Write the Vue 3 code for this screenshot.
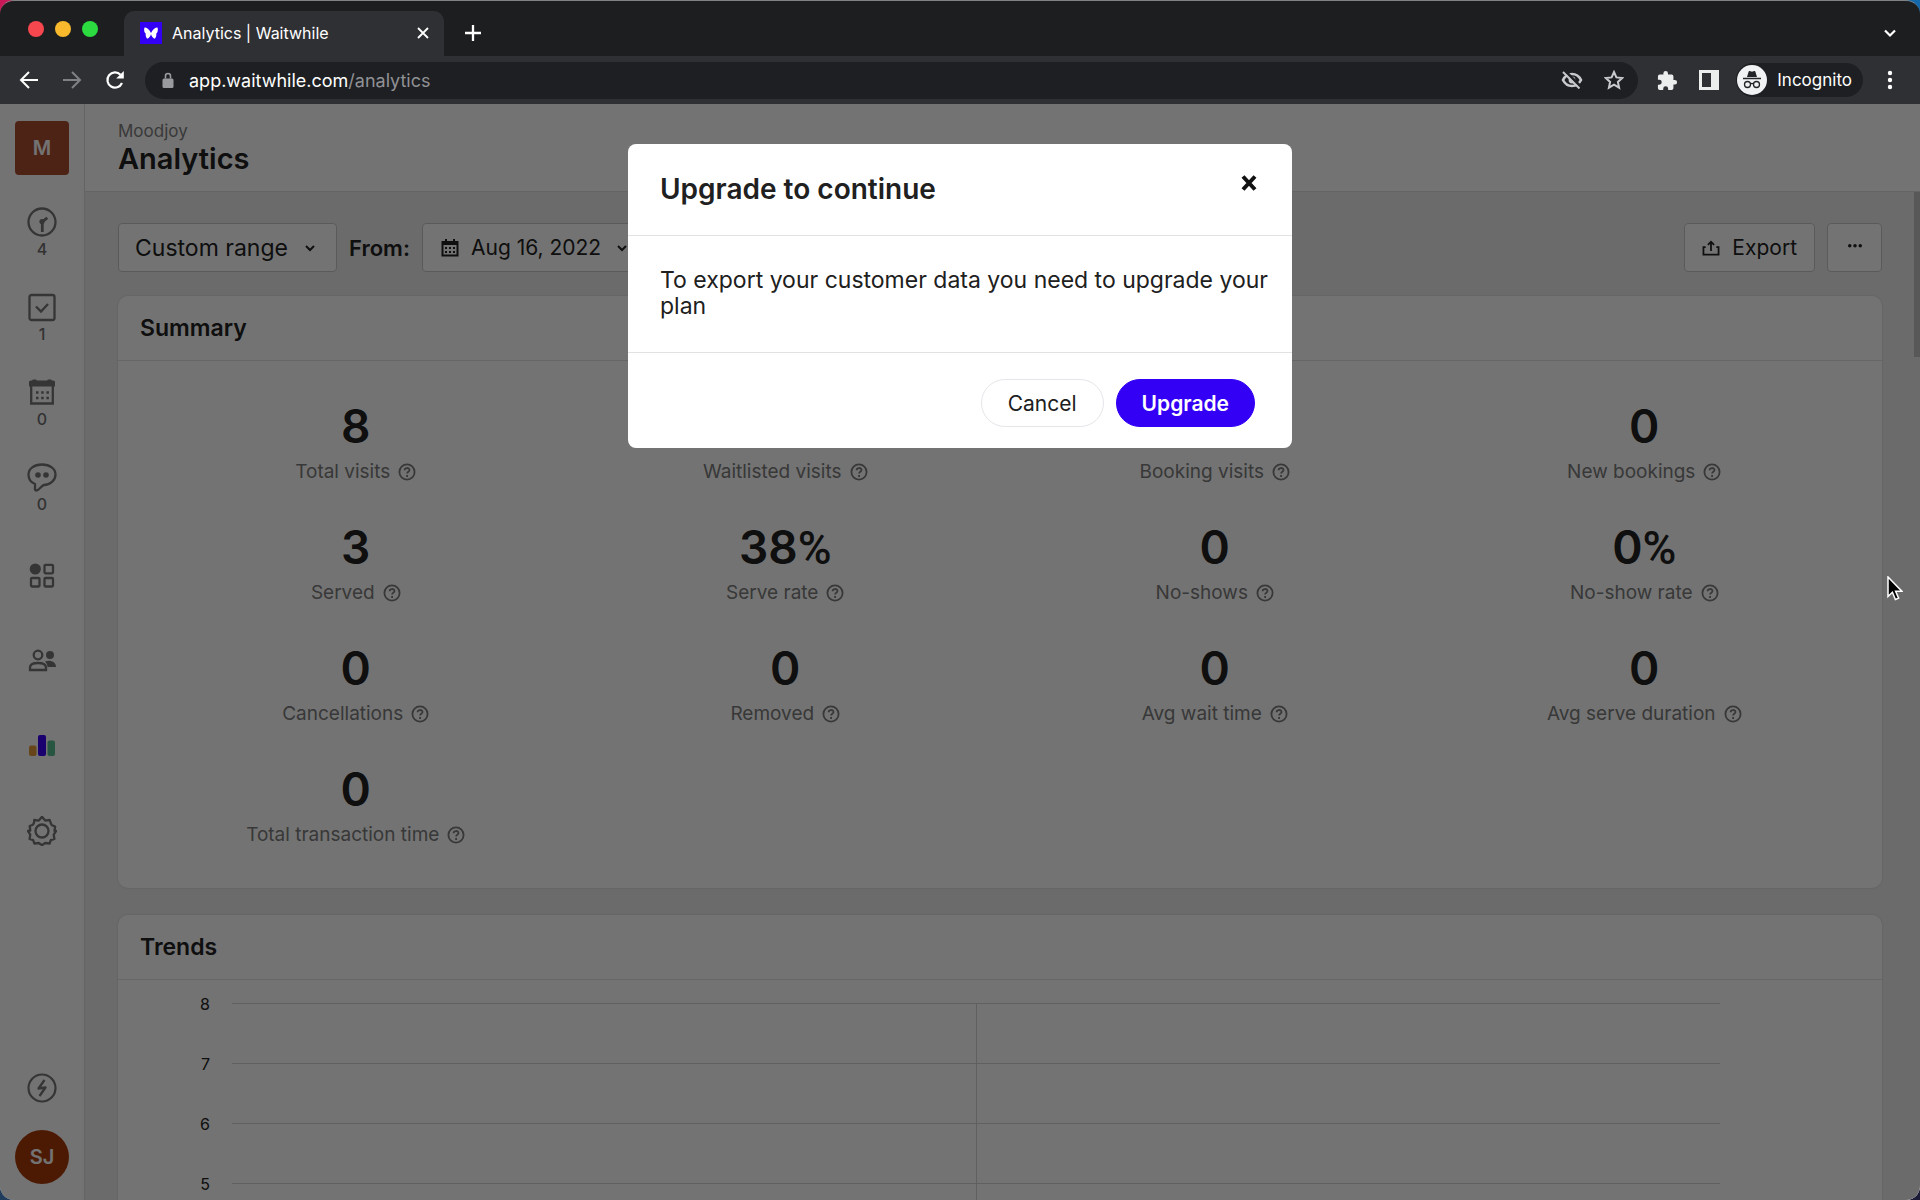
<script setup>
import { ref } from 'vue'

const range = ref('Custom range')

const navItems = [
  { icon: 'gauge', label: 'Dashboard', count: 4 },
  { icon: 'check', label: 'Waitlist', count: 1 },
  { icon: 'calendar', label: 'Bookings', count: 0 },
  { icon: 'chat', label: 'Messages', count: 0 },
  { icon: 'apps', label: 'Apps' },
  { icon: 'people', label: 'Customers' },
  { icon: 'bars', label: 'Analytics' },
  { icon: 'gear', label: 'Settings' },
]

const stats = [
  { value: '8', label: 'Total visits' },
  { value: '', label: 'Waitlisted visits' },
  { value: '', label: 'Booking visits' },
  { value: '0', label: 'New bookings' },
  { value: '3', label: 'Served' },
  { value: '38', unit: '%', label: 'Serve rate' },
  { value: '0', label: 'No-shows' },
  { value: '0', unit: '%', label: 'No-show rate' },
  { value: '0', label: 'Cancellations' },
  { value: '0', label: 'Removed' },
  { value: '0', label: 'Avg wait time' },
  { value: '0', label: 'Avg serve duration' },
  { value: '0', label: 'Total transaction time' },
]

const ticks = [8, 7, 6, 5]
</script>

<template>
  <div class="desktop">
    <div class="window">
      <div class="tabstrip">
        <div class="lights">
          <span class="light red"></span>
          <span class="light amber"></span>
          <span class="light green"></span>
        </div>
        <div class="tab">
          <svg class="favicon" viewBox="0 0 22 22" width="22" height="22">
            <rect width="22" height="22" fill="#3300f5" />
            <path d="M4.500 5.500c2.500 0 5 2 6.500 5.500 1.500-3.500 4-5.500 6.500-5.500.8 2.500.3 4.800-1.200 6 .3 2-.3 4-1.600 5.300-1.900-.9-3-2.600-3.700-4.600-.7 2-1.800 3.700-3.700 4.600C6 15.500 5.400 13.500 5.700 11.500c-1.500-1.200-2-3.500-1.200-6z" fill="#fff" />
          </svg>
          <span class="tab-title">Analytics | Waitwhile</span>
          <button class="plain" aria-label="Close tab">
            <svg viewBox="0 0 14 14" width="14" height="14"><path d="M2 2l10 10M12 2L2 12" stroke="#fff" stroke-width="1.800" /></svg>
          </button>
        </div>
        <button class="plain new-tab" aria-label="New tab">
          <svg viewBox="0 0 18 18" width="18" height="18"><path d="M9 1v16M1 9h16" stroke="#fff" stroke-width="2.300" /></svg>
        </button>
        <button class="plain tab-menu" aria-label="Search tabs">
          <svg viewBox="0 0 14 14" width="14" height="14"><path d="M2 4.500l5 5 5-5" fill="none" stroke="#fff" stroke-width="2.200" /></svg>
        </button>
      </div>

      <div class="toolbar">
        <div class="nav-buttons">
          <button class="plain" aria-label="Back">
            <svg viewBox="0 0 20 20" width="20" height="20"><path d="M19 10H2.500M10 2L2 10l8 8" fill="none" stroke="#fff" stroke-width="2" /></svg>
          </button>
          <button class="plain" aria-label="Forward">
            <svg viewBox="0 0 20 20" width="20" height="20"><path d="M1 10h16.500M10 2l8 8-8 8" fill="none" stroke="#808185" stroke-width="2" /></svg>
          </button>
          <button class="plain" aria-label="Reload">
            <svg viewBox="0 0 20 20" width="20" height="20"><path d="M17 13a7.600 7.600 0 1 1-1.500-8.300" fill="none" stroke="#fff" stroke-width="2.200" /><path d="M18.800 1v7.600h-7.600z" fill="#fff" /></svg>
          </button>
        </div>
        <div class="address">
          <svg viewBox="0 0 14 18" width="14" height="18"><rect x="1.500" y="7.500" width="11" height="9.500" rx="1.500" fill="#9a9b9e" /><path d="M4.500 7.500V5a2.500 2.500 0 0 1 5 0v2.500" fill="none" stroke="#9a9b9e" stroke-width="1.600" /></svg>
          <a class="url" href="#">app.waitwhile.com<span>/analytics</span></a>
          <button class="plain" aria-label="Third-party cookies blocked">
            <svg viewBox="0 0 22 18" width="22" height="18"><path d="M2 9c2-4 5.300-6 9-6s7 2 9 6c-2 4-5.300 6-9 6s-7-2-9-6z" fill="none" stroke="#c8c9cc" stroke-width="2.600" /><circle cx="11" cy="9" r="3.400" fill="#c8c9cc" /><path d="M4 0l16 16" stroke="#1e1f22" stroke-width="3" /><path d="M2 1l16.500 16.500" stroke="#c8c9cc" stroke-width="2" /></svg>
          </button>
          <button class="plain" aria-label="Bookmark this tab">
            <svg viewBox="0 0 20 20" width="20" height="20"><path d="M10 2l2.400 5.400 5.900.6-4.400 3.900 1.200 5.800-5.100-3-5.100 3 1.200-5.800L1.700 8l5.900-.6z" fill="none" stroke="#c8c9cc" stroke-width="2" /></svg>
          </button>
        </div>
        <button class="plain" aria-label="Extensions">
          <svg viewBox="1 0 23 23" width="21" height="21"><path d="M20.500 11H19V7a2 2 0 0 0-2-2h-4V3.500a2.500 2.500 0 0 0-5 0V5H4a2 2 0 0 0-2 2v3.800h1.500a2.700 2.700 0 0 1 0 5.400H2V20a2 2 0 0 0 2 2h3.800v-1.500a2.700 2.700 0 0 1 5.400 0V22H17a2 2 0 0 0 2-2v-4h1.500a2.500 2.500 0 0 0 0-5z" fill="#eceded" /></svg>
        </button>
        <button class="plain panel" aria-label="Side panel">
          <svg viewBox="0 0 20 20" width="20" height="20"><path d="M1.500 1.500h17v17h-17z" fill="none" stroke="#eceded" stroke-width="3" /><path d="M12 2h6v16h-6z" fill="#eceded" /></svg>
        </button>
        <div class="incognito">
          <svg viewBox="0 0 30 30" width="30" height="30"><circle cx="15" cy="15" r="15" fill="#f1f2f3" /><path d="M10 12l1.600-5.300c.2-.6.600-.8 1.200-.6l2.200.6 2.200-.6c.6-.2 1 0 1.200.6L20 12z" fill="#232427" /><path d="M6 13.500h18" stroke="#232427" stroke-width="1.500" /><circle cx="10.500" cy="19.500" r="3" fill="none" stroke="#232427" stroke-width="1.300" /><circle cx="19.500" cy="19.500" r="3" fill="none" stroke="#232427" stroke-width="1.300" /><path d="M13.500 19c1-.7 2-.7 3 0" fill="none" stroke="#232427" stroke-width="1.200" /></svg>
          <span>Incognito</span>
        </div>
        <button class="plain kebab" aria-label="Browser menu">
          <svg viewBox="0 0 6 20" width="6" height="20" fill="#fff"><circle cx="3" cy="3" r="2.200" /><circle cx="3" cy="10" r="2.200" /><circle cx="3" cy="17" r="2.200" /></svg>
        </button>
      </div>

      <div class="page">
        <aside class="sidebar">
          <div class="workspace">M</div>
          <nav class="nav">
            <a v-for="item in navItems" :key="item.icon" class="nav-item" href="#" :aria-label="item.label">
              <svg viewBox="0 0 30 30" width="30" height="30" fill="none" stroke="#767676" stroke-width="2.300">
                <template v-if="item.icon === 'gauge'">
                  <circle cx="15" cy="15" r="13.500" />
                  <path d="M15.300 25V15l5-4.300" stroke-width="2.800" /><circle cx="15" cy="14.500" r="2.600" fill="#767676" stroke="none" />
                </template>
                <template v-else-if="item.icon === 'check'">
                  <rect x="2.500" y="3" width="25" height="25" rx="2" />
                  <path d="M9 14.500l5 5 7-7.500" />
                </template>
                <template v-else-if="item.icon === 'calendar'">
                  <path d="M4.200 9v17.500h21.600V9" />
                  <path d="M2 5c0-1 1-1.500 3-1.500L6 2.500h3l1 1h10l1-1h3l1 1c2 0 3 .5 3 1.500v4.500H2z" fill="#767676" stroke="none" />
                  <path d="M9 15.500h13M9 21h13" stroke-dasharray="2.500 2.700" stroke-width="2.500" />
                </template>
                <template v-else-if="item.icon === 'chat'">
                  <path d="M15 2.500c8 0 13.500 4.200 13.500 10S23 23 17 23c-2.500.3-4 5-8 5.500C7 28.500 8.500 25 8 22 4 20.500 1.500 17 1.500 12.500c0-5.800 5.500-10 13.500-10z" />
                  <circle cx="11" cy="13" r="2.800" fill="#767676" stroke="none" /><circle cx="19" cy="13" r="2.800" fill="#767676" stroke="none" />
                </template>
                <template v-else-if="item.icon === 'apps'">
                  <circle cx="8.300" cy="8" r="5.600" fill="#767676" stroke="none" />
                  <rect x="17.500" y="3.800" width="8.500" height="8.500" rx="1" /><rect x="4" y="17" width="8.500" height="8.500" rx="1" /><rect x="17.500" y="17" width="8.500" height="8.500" rx="1" />
                </template>
                <template v-else-if="item.icon === 'people'">
                  <circle cx="11" cy="9" r="4.300" /><circle cx="23" cy="9" r="4" fill="#767676" stroke="none" />
                  <path d="M3 24V21.500c0-3 3-4.500 8-4.500s8 1.500 8 4.500V24z" />
                  <path d="M18 15.500c5-2 11 0 11 5.500h-8.500c0-2-1-4-2.500-5.500z" fill="#767676" stroke="none" />
                </template>
                <template v-else-if="item.icon === 'bars'">
                  <g stroke="none">
                    <rect x="2" y="14.500" width="7.500" height="10.500" rx="2" fill="#e09a38" />
                    <rect x="11" y="4" width="8" height="21" rx="2" fill="#3a00f5" />
                    <rect x="20.500" y="9.500" width="7.500" height="15.500" rx="2" fill="#56bd92" />
                  </g>
                </template>
                <template v-else>
                  <circle cx="15" cy="15" r="6.500" />
                  <path d="M15 .8l3.200 3.800 4.500-.6 1.200 3.700 1 1.500 3.200 1.300-.6 4.500 1.700 0-2.500 3.600.7 4.400-3.600 1.200-1.200 3.300-4.500-.5L15 29.200 11.800 27l-4.500.5-1.100-3.300-3.600-1.200.7-4.400L.8 15l2.500-.5-.6-4.500 3.200-1.300 1-1.500L7.300 4l4.500.6z" stroke-linejoin="round" />
                </template>
              </svg>
              <span v-if="item.count !== undefined" class="count">{{ item.count }}</span>
            </a>
          </nav>
          <a class="bolt" href="#" aria-label="What's new">
            <svg viewBox="0 0 30 30" width="30" height="30" fill="none" stroke="#767676" stroke-width="2.200"><circle cx="15" cy="15" r="13.500" /><path d="M17.500 7l-6 8.500 7-1L12.500 23" stroke-width="2.300" stroke-linejoin="round" /></svg>
          </a>
          <div class="avatar">SJ</div>
        </aside>

        <div class="content">
          <header class="page-head">
            <span class="crumb">Moodjoy</span>
            <h1>Analytics</h1>
          </header>

          <main class="main">
            <div class="filters">
              <div class="select-box">
                <select v-model="range" aria-label="Date range">
                  <option>Custom range</option>
                </select>
                <svg class="caret" viewBox="0 0 12 12" width="12" height="12"><path d="M2 4l4 4 4-4" fill="none" stroke="#222" stroke-width="2" /></svg>
              </div>
              <span id="from-label" class="from">From:</span>
              <button class="box date" aria-labelledby="from-label">
                <svg viewBox="0 0 18 20" width="18" height="20"><path d="M1.500 4h15v13.500h-15z" fill="none" stroke="#222" stroke-width="2" /><path d="M1 3h3V1h2v2h6V1h2v2h3v4H1z" fill="#222" /><path d="M4 10h10M4 14h10" stroke="#222" stroke-width="2" stroke-dasharray="2 2" /></svg>
                <span>Aug 16, 2022</span>
                <svg viewBox="0 0 12 12" width="12" height="12"><path d="M2 4l4 4 4-4" fill="none" stroke="#222" stroke-width="2" /></svg>
              </button>
              <button class="box export">
                <svg viewBox="0 0 20 18" width="18" height="16" fill="none" stroke="#222" stroke-width="2"><path d="M4 8H1.500v8.500h17V8H16M10 12.500V3M6.500 5.500L10 2l3.500 3.500" /></svg>
                <span>Export</span>
              </button>
              <button class="box more" aria-label="More options">
                <svg viewBox="0 0 16 8" width="14" height="7" fill="#222"><circle cx="2" cy="2" r="2" /><circle cx="8" cy="2" r="2" /><circle cx="14" cy="2" r="2" /></svg>
              </button>
            </div>

            <section class="card">
              <h2>Summary</h2>
              <div class="stats">
                <div v-for="s in stats" :key="s.label" class="stat">
                  <div class="value">{{ s.value }}<span v-if="s.unit">{{ s.unit }}</span></div>
                  <div class="label">
                    <span>{{ s.label }}</span>
                    <svg viewBox="0 0 18 18" width="18" height="18" fill="none" stroke="#7c7c7c" stroke-width="1.800"><circle cx="9" cy="9" r="7.600" /><path d="M6.600 7.300c0-3 4.900-3 4.900-.2 0 1.800-2.400 1.700-2.400 3.500" /><path d="M9.100 12v1.900" /></svg>
                  </div>
                </div>
              </div>
            </section>

            <section class="card">
              <h2>Trends</h2>
              <div class="chart">
                <div class="axis">
                  <span v-for="t in ticks" :key="t">{{ t }}</span>
                </div>
                <div class="plot">
                  <template v-for="t in ticks" :key="t">
                    <div class="cell"></div>
                    <div class="cell split"></div>
                  </template>
                </div>
              </div>
            </section>
            <div class="scroll-thumb"></div>
          </main>
        </div>

        <div class="overlay">
          <div class="modal" role="dialog" aria-labelledby="modal-title">
            <div class="modal-head">
              <h3 id="modal-title">Upgrade to continue</h3>
              <button class="plain close" aria-label="Close">
                <svg viewBox="0 0 16 16" width="16" height="16"><path d="M2 1.500l12 13M14 1.500l-12 13" stroke="#111" stroke-width="4" /></svg>
              </button>
            </div>
            <p>To export your customer data you need to upgrade your plan</p>
            <div class="modal-foot">
              <button class="pill">Cancel</button>
              <button class="pill primary">Upgrade</button>
            </div>
          </div>
        </div>

        <svg class="cursor" viewBox="0 0 16 25" width="16" height="25"><path d="M1 1v19.500l4.400-4.200 3 7.200 3.200-1.400-3-6.900h6.200z" fill="#000" stroke="#fff" stroke-width="1.500" /></svg>
      </div>
    </div>
  </div>
</template>

<style>
body {
  margin: 0;
  overflow: hidden;
}
</style>

<style scoped>
* {
  box-sizing: border-box;
}

.desktop {
  height: 100vh;
  font-family: Inter, "Liberation Sans", sans-serif;
  color: #222222;
  background:
    linear-gradient(#c81858, #1f3c5c) left / 50% 100% no-repeat,
    linear-gradient(#1468ac, #1c1c38) right / 50% 100% no-repeat;
}

.window {
  display: flex;
  flex-direction: column;
  height: 100%;
  border-top: 1px solid #808385;
  border-radius: 14px;
  overflow: hidden;
}

button,
select {
  font: inherit;
  color: inherit;
}

a {
  color: inherit;
  text-decoration: none;
}

svg {
  display: block;
  flex: none;
}

.plain {
  display: flex;
  padding: 0;
  border: 0;
  background: none;
}

.tabstrip {
  display: flex;
  align-items: center;
  height: 55px;
  padding: 0 23px 0 28px;
  background: #1d1e20;
}

.lights {
  display: flex;
  gap: 11px;
  margin-right: 26px;
}

.light {
  width: 16px;
  height: 16px;
  border-radius: 50%;
}

.red {
  background: #f6474f;
}

.amber {
  background: #f8b92d;
}

.green {
  background: #2bdb3f;
}

.tab {
  display: flex;
  align-items: center;
  align-self: flex-end;
  width: 320px;
  height: 45px;
  padding: 0 14px 1px 16px;
  border-radius: 10px 10px 0 0;
  background: #2f3034;
  color: #fff;
  font-size: 16px;
}

.tab-title {
  flex: 1;
  margin-left: 10px;
}

.new-tab {
  margin: 8px 0 0 20px;
}

.tab-menu {
  margin: 8px 0 0 auto;
}

.toolbar {
  display: flex;
  align-items: center;
  height: 48px;
  padding: 0 27px 0 19px;
  background: #2f3034;
}

.nav-buttons {
  display: flex;
  gap: 23px;
  margin-right: 20px;
}

.address {
  display: flex;
  flex: 1;
  align-items: center;
  height: 37px;
  padding: 0 14px 0 16px;
  margin-right: 19px;
  border-radius: 19px;
  background: #1e1f22;
  font-size: 18px;
}

.url {
  flex: 1;
  margin-left: 14px;
  color: #fff;
}

.url span {
  color: #909195;
}

.address .plain {
  margin-left: 21px;
}

.panel {
  margin-left: 21px;
}

.incognito {
  display: flex;
  align-items: center;
  gap: 10px;
  height: 34px;
  padding: 0 11px 0 1px;
  margin-left: 17px;
  border-radius: 17px;
  background: #1e1f22;
  color: #fff;
  font-size: 17px;
}

.kebab {
  margin-left: 24px;
}

.page {
  position: relative;
  display: flex;
  flex: 1;
  min-height: 0;
  background: #fff;
}

.sidebar {
  display: flex;
  flex-direction: column;
  align-items: center;
  width: 85px;
  padding: 17px 0 16px;
  border-right: 1px solid #dedede;
}

.workspace,
.avatar {
  display: flex;
  align-items: center;
  justify-content: center;
  width: 54px;
  height: 54px;
  border-radius: 4px;
  background: #ac4e31;
  color: #fff;
  font-size: 20px;
  font-weight: 600;
}

.avatar {
  border-radius: 50%;
  background: #a83b08;
}

.nav {
  display: flex;
  flex-direction: column;
  width: 100%;
  margin-top: 18px;
}

.nav-item {
  display: flex;
  flex-direction: column;
  align-items: center;
  justify-content: center;
  height: 85px;
}

.count {
  margin-bottom: 4px;
  color: #707070;
  font-size: 16px;
  font-weight: 500;
  line-height: 24px;
}

.bolt {
  margin: auto 0 27px;
}

.content {
  display: flex;
  flex: 1;
  flex-direction: column;
  min-width: 0;
}

.page-head {
  display: flex;
  flex-direction: column;
  justify-content: center;
  height: 88px;
  padding-left: 33px;
  border-bottom: 1px solid #dedede;
}

.crumb {
  color: #808080;
  font-size: 17px;
  line-height: 22px;
}

h1 {
  margin: 0;
  font-size: 29px;
  font-weight: 600;
  line-height: 34px;
}

.main {
  position: relative;
  flex: 1;
  min-height: 0;
  padding: 31px 38px 0 33px;
  background: #eeeeee;
  overflow: hidden;
}

.filters {
  display: flex;
  align-items: center;
  height: 49px;
  margin-bottom: 24px;
  font-size: 21px;
}

.select-box {
  position: relative;
  width: 219px;
  height: 49px;
  font-size: 23px;
}

.select-box select {
  width: 100%;
  height: 100%;
  padding: 0 16px;
  border: 1px solid #c8c8c8;
  border-radius: 4px;
  background: #fff;
  appearance: none;
}

.caret {
  position: absolute;
  top: 19px;
  right: 21px;
  pointer-events: none;
}

.from {
  width: 61px;
  margin: 0 12px;
  font-size: 22px;
  font-weight: 600;
}

.box {
  display: flex;
  align-items: center;
  height: 49px;
  border: 1px solid #c8c8c8;
  border-radius: 4px;
  background: #fff;
}

.date {
  width: 220px;
  padding: 0 13px 0 18px;
}

.date span {
  flex: 1;
  margin-left: 12px;
  text-align: left;
}

.export {
  gap: 12px;
  padding: 0 17px;
  margin-left: auto;
}

.more {
  justify-content: center;
  width: 55px;
  padding: 0;
  margin-left: 12px;
}

.card {
  margin-bottom: 27px;
  border-radius: 10px;
  background: #fff;
  box-shadow: 0 0 3px #00000022;
}

h2 {
  height: 65px;
  margin: 0;
  padding: 0 22px;
  border-bottom: 1px solid #e2e2e2;
  font-size: 23px;
  font-weight: 600;
  line-height: 64px;
}

.stats {
  display: grid;
  grid-template-columns: repeat(4, 1fr);
  row-gap: 31px;
  padding: 35px 23px 39px;
}

.stat {
  text-align: center;
}

.value {
  height: 60px;
  font-size: 46px;
  font-weight: 600;
  line-height: 60px;
}

.value span {
  font-family: Roboto, "Liberation Sans", sans-serif;
  font-weight: 500;
}

.label {
  display: flex;
  align-items: center;
  justify-content: center;
  gap: 8px;
  padding-top: 2px;
  color: #7c7c7c;
  font-size: 19px;
  line-height: 28px;
}

.chart {
  display: flex;
  padding-right: 162px;
}

.axis {
  display: flex;
  flex-direction: column;
  width: 92px;
  margin-right: 22px;
  padding-top: 9px;
  gap: 30px;
  font-size: 16px;
  line-height: 30px;
  text-align: right;
}

.plot {
  display: grid;
  flex: 1;
  grid-template-columns: 1fr 1fr;
  grid-auto-rows: 60px;
  padding-top: 23px;
}

.cell {
  border-top: 1px solid #d4d4d4;
}

.split {
  border-left: 1px solid #d4d4d4;
}

.scroll-thumb {
  position: absolute;
  top: 0;
  right: 0;
  width: 6px;
  height: 165px;
  background: #c4c4c4;
}

.overlay {
  position: absolute;
  inset: 0;
  display: flex;
  align-items: flex-start;
  justify-content: center;
  padding-top: 40px;
  background: rgba(0, 0, 0, 0.55);
}

.modal {
  width: 664px;
  border-radius: 8px;
  background: #fff;
  color: #202020;
}

.modal-head {
  display: flex;
  justify-content: space-between;
  height: 92px;
  padding: 28px 35px 0 32px;
  border-bottom: 1px solid #e2e2e2;
}

h3 {
  margin: 0;
  font-size: 28px;
  font-weight: 600;
  line-height: 34px;
}

.close {
  height: 16px;
  margin-top: 3px;
}

.modal p {
  margin: 0;
  padding: 31px 20px 33px 32px;
  border-bottom: 1px solid #e2e2e2;
  font-size: 23px;
  line-height: 26px;
}

.modal-foot {
  display: flex;
  justify-content: flex-end;
  gap: 12px;
  padding: 26px 37px 21px;
}

.pill {
  height: 48px;
  padding: 0 26px;
  border: 1px solid #e4e6ea;
  border-radius: 24px;
  background: #fff;
  font-size: 21px;
}

.primary {
  padding: 0 25px;
  border-color: #3300f5;
  background: #3300f5;
  color: #fff;
  font-weight: 600;
}

.cursor {
  position: absolute;
  top: 472px;
  right: 17px;
}
</style>
